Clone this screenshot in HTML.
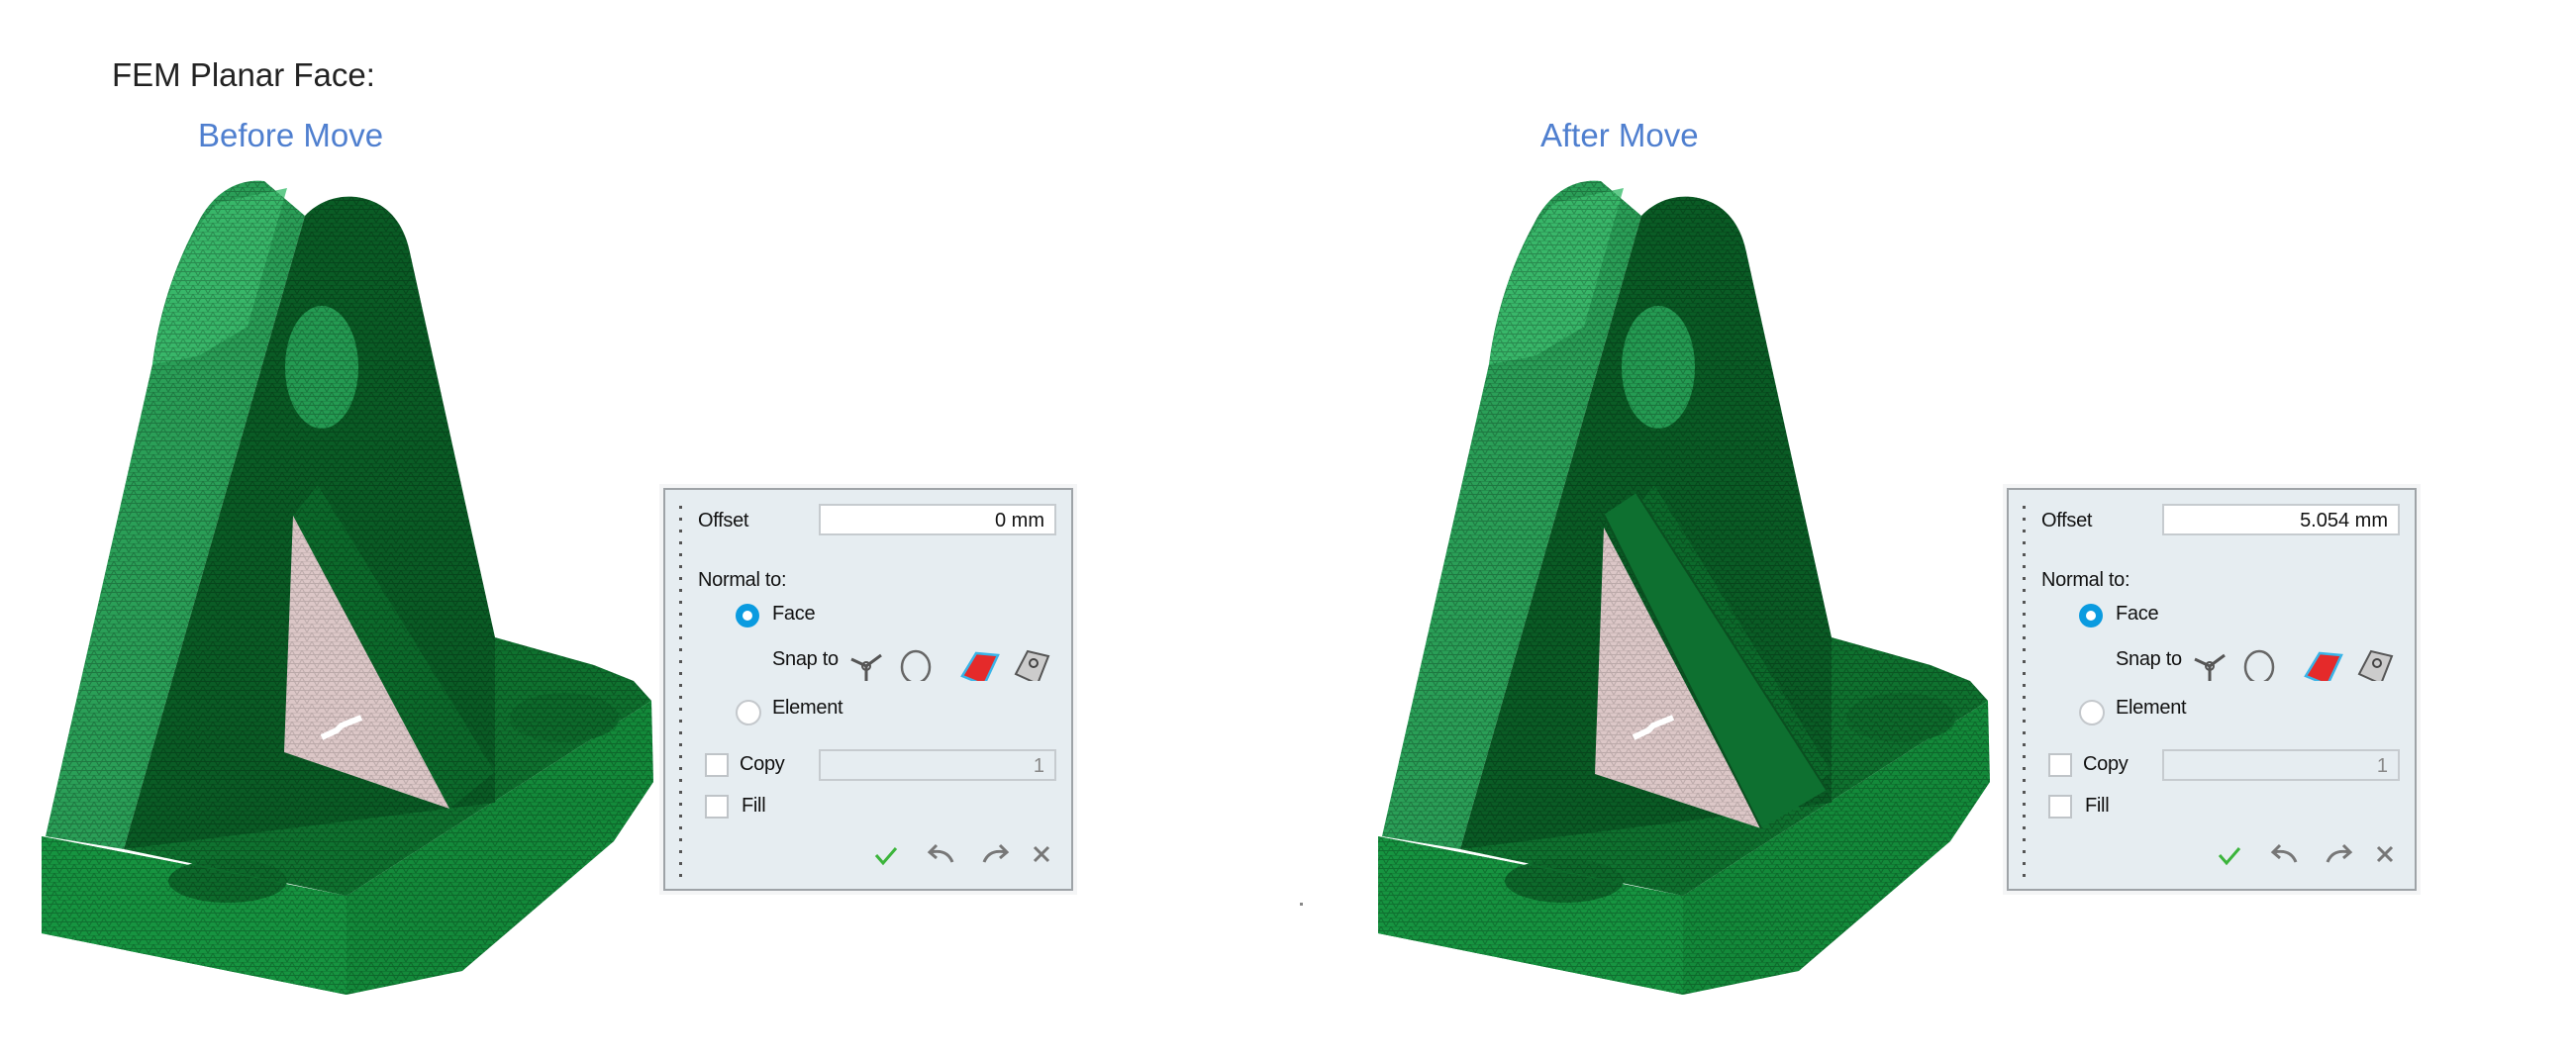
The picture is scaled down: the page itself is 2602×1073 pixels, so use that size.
<!DOCTYPE html>
<html><head><meta charset="utf-8"><style>
html,body{margin:0;padding:0;background:#fff;width:2602px;height:1073px;overflow:hidden;position:relative;font-family:"Liberation Sans",Arial,sans-serif}
.t{position:absolute;white-space:nowrap}
.dlg{position:absolute;top:489px;width:422px;height:415px;background:#f4f5f6;}
.dlg .in{position:absolute;left:4px;top:4px;right:4px;bottom:4px;border:2px solid #9ea3a7;background:#e6edf1}
.dots{position:absolute;left:14px;top:16px;width:3px;height:380px;background:repeating-linear-gradient(#555 0 3px,transparent 3px 12px)}
.lbl{position:absolute;font-size:20px;color:#111;letter-spacing:-0.3px}
.box{position:absolute;left:155px;width:240px;height:32px;border:2px solid #c6cbcf;background:#fff;font-size:20px;text-align:right;line-height:30px;padding-right:10px;box-sizing:border-box;color:#111}
.cb{position:absolute;width:24px;height:24px;border:2px solid #bfc4c8;background:#fff;box-sizing:border-box}
</style></head><body>
<div class="t" style="left:113px;top:57px;font-size:33px;color:#222">FEM Planar Face:</div>
<div class="t" style="left:200px;top:118px;font-size:33px;color:#4f7fcf">Before Move</div>
<div class="t" style="left:1556px;top:118px;font-size:33px;color:#4f7fcf">After Move</div>
<div class="t" style="left:1313px;top:912px;width:3px;height:3px;background:#888"></div>

<svg width="2602" height="1073" style="position:absolute;left:0;top:0">
<defs>
<pattern id="m" width="10" height="9" patternUnits="userSpaceOnUse">
<path d="M0 0H10M0 9L5 0L10 9M0 4.5H10" stroke="#000" stroke-opacity="0.25" stroke-width="1" fill="none"/>
</pattern>
<clipPath id="cl">
<polygon points="42,845 350,905 658,708 660,790 620,850 467,981 350,1005 42,943"/>
<polygon points="125,858 350,905 658,708 640,688 600,672 500,644 500,800"/>
<path d="M46,845 L125,858 L308,218 L267,183 C240,180 215,195 200,225 C175,270 160,320 154,368 Z"/>
<path d="M125,858 L308,218 C330,195 360,195 380,205 C400,215 410,235 414,255 L500,644 L500,811 Z"/>
</clipPath>
<g id="model">
<polygon points="42,845 350,905 658,708 660,790 620,850 467,981 350,1005 42,943" fill="#138a3a"/>
<polygon points="350,905 350,1005 42,943 42,845" fill="#169440"/>
<polygon points="125,858 350,905 658,708 640,688 600,672 500,644 500,800" fill="#0f722f"/>
<ellipse cx="230" cy="890" rx="60" ry="22" fill="#0d6a2b"/>
<ellipse cx="570" cy="725" rx="55" ry="25" fill="#0d6a2b"/>
<path d="M46,845 L125,858 L308,218 L267,183 C240,180 215,195 200,225 C175,270 160,320 154,368 Z" fill="#2a9f57"/>
<path d="M154,368 C165,300 185,240 220,205 L290,190 L250,330 L200,360 Z" fill="#3cbd6e" opacity="0.8"/>
<path d="M125,858 L308,218 C330,195 360,195 380,205 C400,215 410,235 414,255 L500,644 L500,811 Z" fill="#0a5c25"/>
<ellipse cx="325" cy="371" rx="37" ry="62" fill="#249b52"/>
<polygon points="296,521 321,490 500,780 454,817" fill="#0c6a2b"/>
<rect x="0" y="170" width="700" height="850" fill="url(#m)" clip-path="url(#cl)"/>
</g>
</defs>
<use href="#model"/>
<polygon points="296,521 287,760 454,817" fill="#dcc7c7"/>
<polygon points="296,521 287,760 454,817" fill="url(#m)" opacity="0.6"/>
<path d="M325,745 L340,738 L345,733 L365,725" stroke="#fff" stroke-width="6" fill="none"/>
<g transform="translate(1350,0)">
<use href="#model"/>
<polygon points="270,533 261,782 429,837" fill="#dcc7c7"/>
<polygon points="270,533 261,782 429,837" fill="url(#m)" opacity="0.6"/>
<polygon points="270,520 303,498 495,798 429,837" fill="#0e7030"/>
<path d="M270,520 L429,837 M303,498 L495,798" stroke="#0a4f20" stroke-width="2"/>
<path d="M300,745 L315,738 L320,733 L340,725" stroke="#fff" stroke-width="6" fill="none"/>
</g>
</svg>

<div class="dlg" style="left:666px">
 <div class="in">
  <div class="dots"></div>
  <div class="lbl" style="left:33px;top:20px">Offset</div>
  <div class="box" style="top:14px">0 mm</div>
  <div class="lbl" style="left:33px;top:80px">Normal to:</div>
  <div style="position:absolute;left:71px;top:115px;width:24px;height:24px;border-radius:50%;background:#0a9be0"><div style="position:absolute;left:7px;top:7px;width:10px;height:10px;border-radius:50%;background:#fff"></div></div>
  <div class="lbl" style="left:108px;top:114px">Face</div>
  <div class="lbl" style="left:108px;top:160px">Snap to</div>
  <svg style="position:absolute;left:186px;top:145px" width="210" height="48">
   <path d="M17 33V48M17 33L2 26M17 33L32 22" stroke="#555" stroke-width="3" fill="none"/><circle cx="17" cy="33" r="4" fill="none" stroke="#555" stroke-width="2"/>
   <ellipse cx="67" cy="34" rx="14" ry="16" fill="none" stroke="#666" stroke-width="2.5"/>
   <path d="M114 43L128 20L150 22L136 52Z" fill="#e52a2a" stroke="#3ab4e8" stroke-width="2.5"/>
   <path d="M168 41L180 18L201 23L190 51Z" fill="#ccc" stroke="#555" stroke-width="2"/><circle cx="186" cy="30" r="4" fill="none" stroke="#444" stroke-width="2"/>
  </svg>
  <div style="position:absolute;left:71px;top:212px;width:22px;height:22px;border-radius:50%;border:2px solid #c4c8cc;background:#fff"></div>
  <div class="lbl" style="left:108px;top:209px">Element</div>
  <div class="cb" style="left:40px;top:266px"></div>
  <div class="lbl" style="left:75px;top:266px">Copy</div>
  <div class="box" style="top:262px;background:#e6edf1;color:#888">1</div>
  <div class="cb" style="left:40px;top:308px"></div>
  <div class="lbl" style="left:77px;top:308px">Fill</div>
  <svg style="position:absolute;left:210px;top:354px" width="200" height="30">
   <path d="M3 15L10 23L23 8" stroke="#3cb53c" stroke-width="3" fill="none"/>
   <path d="M80 22C76 12 68 10 58 12M64 5L57 12L64 18" stroke="#777" stroke-width="3" fill="none"/>
   <path d="M112 22C116 12 124 10 134 12M128 5L135 12L128 18" stroke="#777" stroke-width="3" fill="none"/>
   <path d="M163 7L177 21M177 7L163 21" stroke="#777" stroke-width="3"/>
  </svg>
 </div>
</div>
<div class="dlg" style="left:2023px">
 <div class="in">
  <div class="dots"></div>
  <div class="lbl" style="left:33px;top:20px">Offset</div>
  <div class="box" style="top:14px">5.054 mm</div>
  <div class="lbl" style="left:33px;top:80px">Normal to:</div>
  <div style="position:absolute;left:71px;top:115px;width:24px;height:24px;border-radius:50%;background:#0a9be0"><div style="position:absolute;left:7px;top:7px;width:10px;height:10px;border-radius:50%;background:#fff"></div></div>
  <div class="lbl" style="left:108px;top:114px">Face</div>
  <div class="lbl" style="left:108px;top:160px">Snap to</div>
  <svg style="position:absolute;left:186px;top:145px" width="210" height="48">
   <path d="M17 33V48M17 33L2 26M17 33L32 22" stroke="#555" stroke-width="3" fill="none"/><circle cx="17" cy="33" r="4" fill="none" stroke="#555" stroke-width="2"/>
   <ellipse cx="67" cy="34" rx="14" ry="16" fill="none" stroke="#666" stroke-width="2.5"/>
   <path d="M114 43L128 20L150 22L136 52Z" fill="#e52a2a" stroke="#3ab4e8" stroke-width="2.5"/>
   <path d="M168 41L180 18L201 23L190 51Z" fill="#ccc" stroke="#555" stroke-width="2"/><circle cx="186" cy="30" r="4" fill="none" stroke="#444" stroke-width="2"/>
  </svg>
  <div style="position:absolute;left:71px;top:212px;width:22px;height:22px;border-radius:50%;border:2px solid #c4c8cc;background:#fff"></div>
  <div class="lbl" style="left:108px;top:209px">Element</div>
  <div class="cb" style="left:40px;top:266px"></div>
  <div class="lbl" style="left:75px;top:266px">Copy</div>
  <div class="box" style="top:262px;background:#e6edf1;color:#888">1</div>
  <div class="cb" style="left:40px;top:308px"></div>
  <div class="lbl" style="left:77px;top:308px">Fill</div>
  <svg style="position:absolute;left:210px;top:354px" width="200" height="30">
   <path d="M3 15L10 23L23 8" stroke="#3cb53c" stroke-width="3" fill="none"/>
   <path d="M80 22C76 12 68 10 58 12M64 5L57 12L64 18" stroke="#777" stroke-width="3" fill="none"/>
   <path d="M112 22C116 12 124 10 134 12M128 5L135 12L128 18" stroke="#777" stroke-width="3" fill="none"/>
   <path d="M163 7L177 21M177 7L163 21" stroke="#777" stroke-width="3"/>
  </svg>
 </div>
</div>
</body></html>
